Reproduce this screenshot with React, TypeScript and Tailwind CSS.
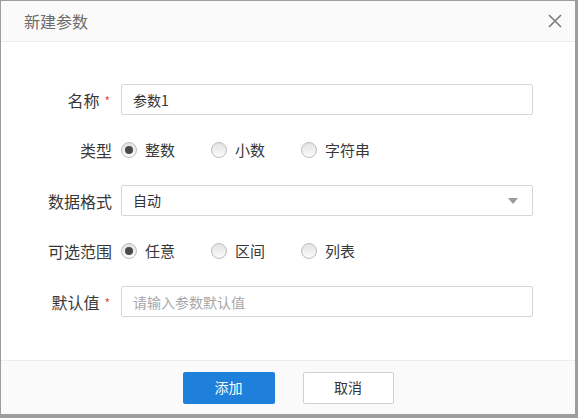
import { useState } from 'react'

const font = { fontFamily: '"Noto Sans CJK SC", "Noto Sans", sans-serif' }

function Radio({ label, checked, onClick }: { label: string; checked: boolean; onClick: () => void }) {
  return (
    <button type="button" onClick={onClick} className="flex items-center w-[90px] h-full text-left">
      <span className="w-[16px] h-[16px] rounded-full border border-[#bdbdbd] bg-gradient-to-b from-[#e2e2e2] to-[#fbfbfb] flex items-center justify-center shrink-0">
        {checked && <span className="w-[8px] h-[8px] rounded-full bg-[#4a4a4a]" />}
      </span>
      <span className="ml-[8px] text-[15px] text-[#383838]">{label}</span>
    </button>
  )
}

function Label({ text, required }: { text: string; required?: boolean }) {
  return (
    <div className="w-[111px] shrink-0 flex items-center justify-end text-[16px] text-[#383838]">
      <span>{text}</span>
      {required && <span className="text-[#e84a4a] text-[12px] ml-[5px] mr-[2px] mt-[2px]">*</span>}
    </div>
  )
}

export default function App() {
  const [name, setName] = useState('参数1')
  const [kind, setKind] = useState('整数')
  const [range, setRange] = useState('任意')
  const [defVal, setDefVal] = useState('')

  return (
    <div className="w-[578px] h-[418px] bg-[#9d9d9d] pl-px pt-px" style={font}>
      <div className="w-[574px] h-[413px] bg-white flex flex-col">
        <div className="h-[41px] shrink-0 bg-[#fafafa] border-b border-[#ededed] flex items-center justify-between pl-[23px] pr-[12px]">
          <span className="text-[16px] text-[#6b6b6b]">新建参数</span>
          <svg width="16" height="16" viewBox="0 0 16 16" className="text-[#7a7a7a]">
            <path d="M2 2 L14 14 M14 2 L2 14" stroke="currentColor" strokeWidth="1.6" fill="none" />
          </svg>
        </div>

        <div className="flex-1 pt-[42px] flex flex-col gap-[19.5px]">
          <div className="flex h-[31px] gap-[9px]">
            <Label text="名称" required />
            <input
              value={name}
              onChange={(e) => setName(e.target.value)}
              className="w-[412px] h-full border border-[#d6d6d6] rounded-[2px] px-[11px] text-[14px] text-[#333] outline-none"
            />
          </div>

          <div className="flex h-[31px] gap-[9px]">
            <Label text="类型" />
            <div className="flex h-full items-center">
              {['整数', '小数', '字符串'].map((k) => (
                <Radio key={k} label={k} checked={kind === k} onClick={() => setKind(k)} />
              ))}
            </div>
          </div>

          <div className="flex h-[31px] gap-[9px]">
            <Label text="数据格式" />
            <div className="w-[412px] h-full border border-[#d6d6d6] rounded-[2px] pl-[11px] pr-[14px] flex items-center justify-between">
              <span className="text-[14px] text-[#333]">自动</span>
              <svg width="10" height="6" viewBox="0 0 10 6">
                <path d="M0 0 H10 L5 6 Z" fill="#9a9a9a" />
              </svg>
            </div>
          </div>

          <div className="flex h-[31px] gap-[9px]">
            <Label text="可选范围" />
            <div className="flex h-full items-center">
              {['任意', '区间', '列表'].map((k) => (
                <Radio key={k} label={k} checked={range === k} onClick={() => setRange(k)} />
              ))}
            </div>
          </div>

          <div className="flex h-[31px] gap-[9px]">
            <Label text="默认值" required />
            <input
              value={defVal}
              onChange={(e) => setDefVal(e.target.value)}
              placeholder="请输入参数默认值"
              className="w-[412px] h-full border border-[#d6d6d6] rounded-[2px] px-[11px] text-[14px] text-[#333] placeholder:text-[#a8a8a8] outline-none"
            />
          </div>
        </div>

        <div className="h-[54px] shrink-0 bg-[#fafafa] border-t border-[#ededed] flex items-center justify-center gap-[28px]">
          <button className="w-[92px] h-[32px] rounded-[2px] bg-[#1f80dc] text-white text-[14px]">添加</button>
          <button className="w-[91px] h-[32px] rounded-[2px] bg-white border border-[#d0d0d0] text-[#333] text-[14px]">取消</button>
        </div>
      </div>
    </div>
  )
}
